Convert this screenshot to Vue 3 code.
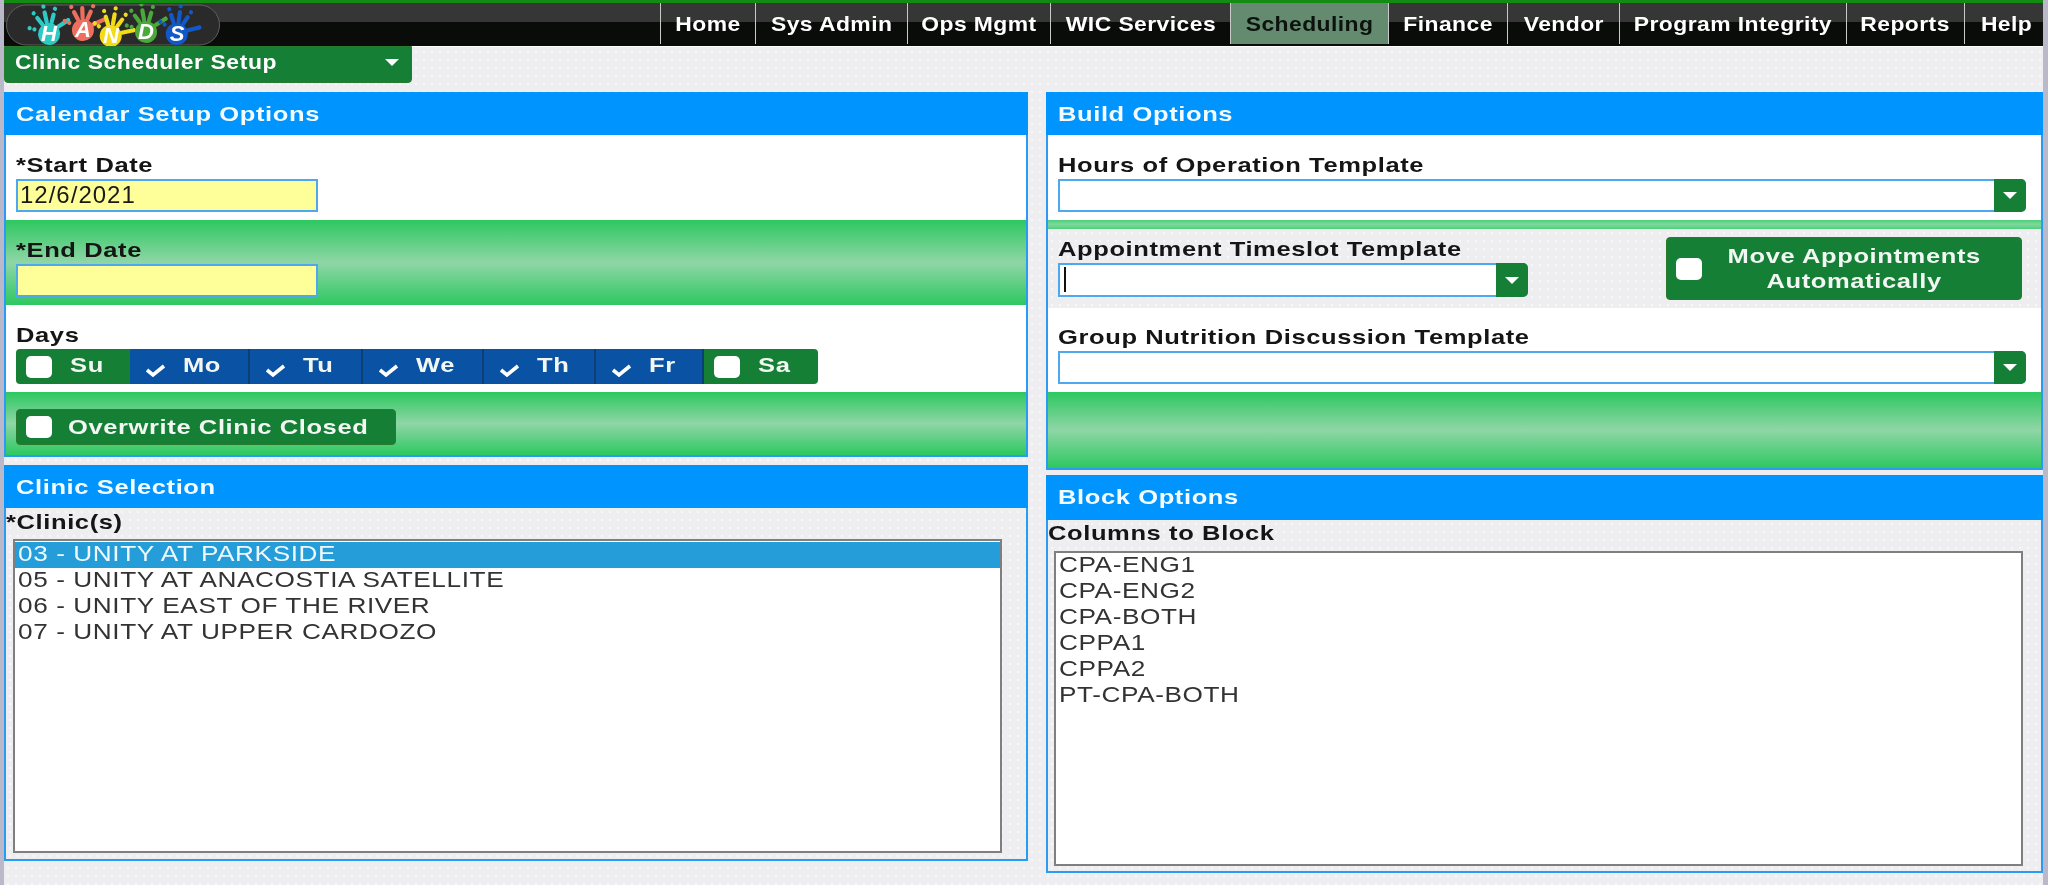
<script setup>
const navItems = [
  { label: 'Home', w: 95 }, { label: 'Sys Admin', w: 152 }, { label: 'Ops Mgmt', w: 143 },
  { label: 'WIC Services', w: 180 }, { label: 'Scheduling', w: 158, active: true }, { label: 'Finance', w: 119 },
  { label: 'Vendor', w: 112 }, { label: 'Program Integrity', w: 227 }, { label: 'Reports', w: 118 }, { label: 'Help', w: 84 }
]
const days = [
  { label: 'Su', w: 114 }, { label: 'Mo', w: 120, on: true }, { label: 'Tu', w: 113, on: true },
  { label: 'We', w: 121, on: true }, { label: 'Th', w: 112, on: true }, { label: 'Fr', w: 108, on: true }, { label: 'Sa', w: 114 }
]
const clinics = ['03 - UNITY AT PARKSIDE', '05 - UNITY AT ANACOSTIA SATELLITE', '06 - UNITY EAST OF THE RIVER', '07 - UNITY AT UPPER CARDOZO']
const columns = ['CPA-ENG1', 'CPA-ENG2', 'CPA-BOTH', 'CPPA1', 'CPPA2', 'PT-CPA-BOTH']
const hands = [
  { l: 'H', x: 43, y: 29, c: '#2ccbc6', r: -6 },
  { l: 'A', x: 77, y: 25, c: '#ef6f5e', r: 4 },
  { l: 'N', x: 105, y: 31, c: '#f3db18', r: 16 },
  { l: 'D', x: 140, y: 27, c: '#4ba83a', r: -4 },
  { l: 'S', x: 171, y: 29, c: '#1258c9', r: 14 }
]
const fingers = [
  { a: -70, y1: -15, y2: -15, t: -20 }, { a: -32, y1: -11, y2: -19, t: -25 }, { a: -6, y1: -11, y2: -21, t: -27 },
  { a: 20, y1: -11, y2: -19, t: -25 }, { a: 62, y1: -11, y2: -23, t: -23 }
]
</script>

<template>
  <div class="page">
    <header class="topbar">
      <svg class="logo" width="214" height="42" viewBox="0 0 214 42">
        <rect x="0.5" y="1" width="213" height="40" rx="20" fill="#2a2a2a" stroke="#5f5f5f" />
        <g v-for="h in hands" :key="h.l" :transform="`translate(${h.x} ${h.y}) rotate(${h.r})`">
          <g v-for="(f, i) in fingers" :key="i" :transform="`rotate(${f.a})`" :stroke="h.c" stroke-width="4.2" stroke-linecap="round">
            <line x1="0" :y1="f.y1" x2="0" :y2="f.y2" />
            <line x1="0" :y1="f.t" x2="0" :y2="f.t" />
          </g>
          <ellipse cx="0" cy="1" rx="11" ry="11" :fill="h.c" />
        </g>
        <text v-for="h in hands" :key="'t' + h.l" :x="h.x" :y="h.y + 8" text-anchor="middle" class="logo-letter">{{ h.l }}</text>
      </svg>
      <nav class="nav">
        <a v-for="n in navItems" :key="n.label" class="nav-item" :class="{ active: n.active }" :style="{ width: n.w + 'px' }"><span class="nav-text">{{ n.label }}</span></a>
      </nav>
    </header>

    <div class="subbar">
      <button class="menu-btn"><span class="menu-text">Clinic Scheduler Setup</span><i class="caret"></i></button>
    </div>

    <main class="columns">
      <div class="col">
        <section class="panel calendar">
          <h2 class="panel-head"><span class="wide">Calendar Setup Options</span></h2>
          <div class="row row-h85">
            <label class="lbl"><span class="wide">*Start Date</span></label>
            <input class="date" value="12/6/2021" readonly />
          </div>
          <div class="row row-h85 green">
            <label class="lbl"><span class="wide">*End Date</span></label>
            <input class="date" value="" readonly />
          </div>
          <div class="row row-h87">
            <label class="lbl"><span class="wide">Days</span></label>
            <div class="days">
              <div v-for="d in days" :key="d.label" class="day" :class="{ on: d.on }" :style="{ width: d.w + 'px' }">
                <svg v-if="d.on" class="check" width="24" height="18" viewBox="0 0 24 18"><path d="M3 10 L9 15 L20 6" fill="none" stroke="#fff" stroke-width="3.6" /></svg>
                <span v-else class="box"></span>
                <span class="day-label wide">{{ d.label }}</span>
              </div>
            </div>
          </div>
          <div class="row row-h63 green overwrite">
            <button class="toggle"><span class="box"></span><span class="wide">Overwrite Clinic Closed</span></button>
          </div>
        </section>

        <section class="panel clinic">
          <h2 class="panel-head"><span class="wide">Clinic Selection</span></h2>
          <div class="list-body">
            <label class="lbl list-lbl"><span class="wide">*Clinic(s)</span></label>
            <ul class="list">
              <li v-for="(c, i) in clinics" :key="c" :class="{ sel: i === 0 }"><span class="wide-list">{{ c }}</span></li>
            </ul>
          </div>
        </section>
      </div>

      <div class="col right">
        <section class="panel build">
          <h2 class="panel-head"><span class="wide">Build Options</span></h2>
          <div class="row row-h85">
            <label class="lbl"><span class="wide">Hours of Operation Template</span></label>
            <div class="combo"><span class="combo-btn"><i class="caret"></i></span></div>
          </div>
          <div class="strip"></div>
          <div class="appt">
            <div class="appt-field">
              <label class="lbl"><span class="wide">Appointment Timeslot Template</span></label>
              <div class="combo tall"><span class="cursor"></span><span class="combo-btn"><i class="caret"></i></span></div>
            </div>
            <button class="toggle move"><span class="box"></span><span class="move-text"><span class="wide-c">Move Appointments</span><br /><span class="wide-c">Automatically</span></span></button>
          </div>
          <div class="row row-h84">
            <label class="lbl"><span class="wide">Group Nutrition Discussion Template</span></label>
            <div class="combo"><span class="combo-btn"><i class="caret"></i></span></div>
          </div>
          <div class="green filler"></div>
        </section>

        <section class="panel block">
          <h2 class="panel-head"><span class="wide">Block Options</span></h2>
          <div class="list-body">
            <label class="lbl list-lbl"><span class="wide">Columns to Block</span></label>
            <ul class="list">
              <li v-for="c in columns" :key="c"><span class="wide-list">{{ c }}</span></li>
            </ul>
          </div>
        </section>
      </div>
    </main>
  </div>
</template>

<style>
html, body { margin: 0; background: #b9b9c9; }
</style>

<style scoped>
.page {
  width: 2039px;
  height: 885px;
  margin-left: 4px;
  overflow: hidden;
  font-family: "Liberation Sans", Arial, sans-serif;
  background-color: #eeeef1;
  background-image: radial-gradient(circle, #f7f7f9 1px, transparent 1.6px);
  background-size: 8px 8px;
  filter: blur(0.45px);
}
.wide, .wide-c, .wide-list, .nav-text, .menu-text {
  display: inline-block;
  white-space: nowrap;
  transform-origin: left center;
}
.wide { transform: scaleX(1.215); letter-spacing: 0.5px; }
.wide-c { transform: scaleX(1.215); transform-origin: center; letter-spacing: 0.5px; }
.wide-list { transform: scaleX(1.19); letter-spacing: 0.5px; }
.nav-text { transform: scaleX(1.09); transform-origin: center; letter-spacing: 0.4px; }
.menu-text { transform: scaleX(1.145); letter-spacing: 0.5px; }
.topbar {
  position: relative;
  height: 46px;
  box-sizing: border-box;
  border-top: 3px solid #138a12;
  background: linear-gradient(#363636 0, #363636 19px, #0a0c0a 19px);
  display: flex;
  justify-content: flex-end;
}
.logo { position: absolute; left: 2px; top: 1px; }
.logo-letter { font: italic 700 22px "Liberation Sans", sans-serif; fill: #fff; }
.nav { display: flex; margin-right: -5px; }
.nav-item {
  box-sizing: border-box;
  border-left: 1px solid #c9c9c9;
  height: 41px;
  display: flex;
  align-items: center;
  justify-content: center;
  color: #fff;
  font-weight: 700;
  font-size: 21px;
  white-space: nowrap;
}
.nav-item.active { background: #648a6f; color: #0c130e; }
.subbar { height: 46px; box-shadow: inset 0 1px #fff; }
.menu-btn {
  width: 408px;
  height: 37px;
  margin: 0;
  padding: 0 12px 4px 10px;
  border: 1px solid #287a2f;
  border-radius: 0 0 4px 4px;
  background: #167f36;
  color: #fff;
  font: 700 20px "Liberation Sans", sans-serif;
  display: flex;
  align-items: center;
  justify-content: space-between;
}
.caret {
  display: inline-block;
  width: 0;
  height: 0;
  border-left: 7px solid transparent;
  border-right: 7px solid transparent;
  border-top: 7px solid #fff;
}
.columns { display: flex; gap: 18px; align-items: flex-start; }
.col { width: 1024px; display: flex; flex-direction: column; gap: 8px; }
.col.right { width: 997px; gap: 5px; }
.panel {
  box-sizing: border-box;
  border: 2px solid #2a9bf5;
  border-top: 0;
  background: #fff;
  display: flex;
  flex-direction: column;
}
.panel > * { flex-shrink: 0; }
.panel-head {
  margin: 0 -2px;
  height: 43px;
  line-height: 44px;
  padding-left: 12px;
  background: #0094ff;
  color: #f4fbff;
  font-size: 21px;
  font-weight: 700;
}
.block .panel-head { height: 45px; line-height: 44px; }
.row {
  box-sizing: border-box;
  display: flex;
  flex-direction: column;
  justify-content: flex-end;
  padding: 0 15px 8px 10px;
}
.row-h85 { height: 85px; }
.row-h87 { height: 87px; }
.row-h84 { height: 84px; }
.row-h63 { height: 63px; padding-bottom: 10px; }
.green { background: linear-gradient(#2dc860, #8fd6a6 50%, #2dc860); }
.lbl {
  display: block;
  height: 26px;
  line-height: 24px;
  color: #151515;
  font-size: 21px;
  font-weight: 700;
  white-space: nowrap;
}
.date {
  box-sizing: border-box;
  width: 302px;
  height: 33px;
  margin: 0;
  padding: 0 0 2px 2px;
  border: 2px solid #4ea8ee;
  background: #ffff99;
  color: #1a1a1a;
  font: 24px "Liberation Sans", sans-serif;
  letter-spacing: 1px;
  outline: none;
}
.days {
  display: flex;
  height: 35px;
  border-radius: 4px;
  overflow: hidden;
  width: max-content;
}
.day {
  box-sizing: border-box;
  background: #167f36;
  color: #f2f7f3;
  display: flex;
  align-items: center;
  font-size: 21px;
  font-weight: 700;
  padding-left: 10px;
}
.day.on {
  background: #0a52a3;
  border-right: 2px solid #0b3f75;
  padding-left: 14px;
}
.day-label { margin-left: 18px; margin-top: -4px; }
.day.on .day-label { margin-left: 15px; }
.check { margin-top: 5px; }
.box {
  flex: none;
  display: inline-block;
  width: 26px;
  height: 22px;
  border-radius: 5px;
  background: #fff;
}
.toggle {
  box-sizing: border-box;
  margin: 0;
  border: 1px solid #2a7a2c;
  border-radius: 4px;
  background: #167f36;
  color: #f2f7f3;
  font: 700 21px "Liberation Sans", sans-serif;
  display: flex;
  align-items: center;
}
.overwrite .toggle {
  width: 380px;
  height: 36px;
  padding: 0 0 0 9px;
  gap: 16px;
}
.strip { height: 9px; background: linear-gradient(#4fd07c, #7fd89b 50%, #4fd07c); }
.appt {
  box-sizing: border-box;
  height: 79px;
  padding: 8px 19px 11px 10px;
  display: flex;
  justify-content: space-between;
  background-color: #eeeef1;
  background-image: radial-gradient(circle, #f7f7f9 1px, transparent 1.6px);
  background-size: 8px 8px;
}
.appt-field {
  width: 470px;
  display: flex;
  flex-direction: column;
  justify-content: flex-end;
}
.combo {
  position: relative;
  box-sizing: border-box;
  height: 33px;
  border: 2px solid #4ea8ee;
  border-radius: 0 5px 5px 0;
  background: #fff;
  display: flex;
  justify-content: flex-end;
}
.combo.tall { height: 34px; }
.combo-btn {
  width: 32px;
  margin: -2px;
  background: #167f36;
  border-radius: 0 5px 5px 0;
  display: flex;
  align-items: center;
  justify-content: center;
}
.cursor {
  position: absolute;
  left: 4px;
  top: 2px;
  width: 2px;
  height: 25px;
  background: #111;
}
.toggle.move {
  width: 356px;
  height: 63px;
  padding: 0 0 0 9px;
}
.move-text { flex: 1; text-align: center; line-height: 25px; padding: 0 14px 2px 0; }
.filler { height: 76px; }
.calendar { height: 365px; }
.clinic { height: 396px; }
.build { height: 378px; }
.block { height: 398px; }
.list-body {
  flex: 1 0 0;
  min-height: 0;
  display: flex;
  flex-direction: column;
  background-color: #eeeef1;
  background-image: radial-gradient(circle, #f7f7f9 1px, transparent 1.6px);
  background-size: 8px 8px;
}
.list-lbl { flex: none; height: 31px; line-height: 28px; }
.block .list-lbl { line-height: 26px; }
.list {
  list-style: none;
  margin: 0 24px 6px 7px;
  padding: 1px 0 0 0;
  flex: 1;
  box-sizing: border-box;
  border: 2px solid #7f7f7f;
  background: #fff;
  color: #333;
  font-size: 22px;
}
.block .list { margin: 0 18px 5px 6px; padding-top: 0; }
.list li { height: 26px; line-height: 24px; padding-left: 3px; white-space: nowrap; }
.list li.sel { background: #259dd8; color: #eef8fd; }
</style>
